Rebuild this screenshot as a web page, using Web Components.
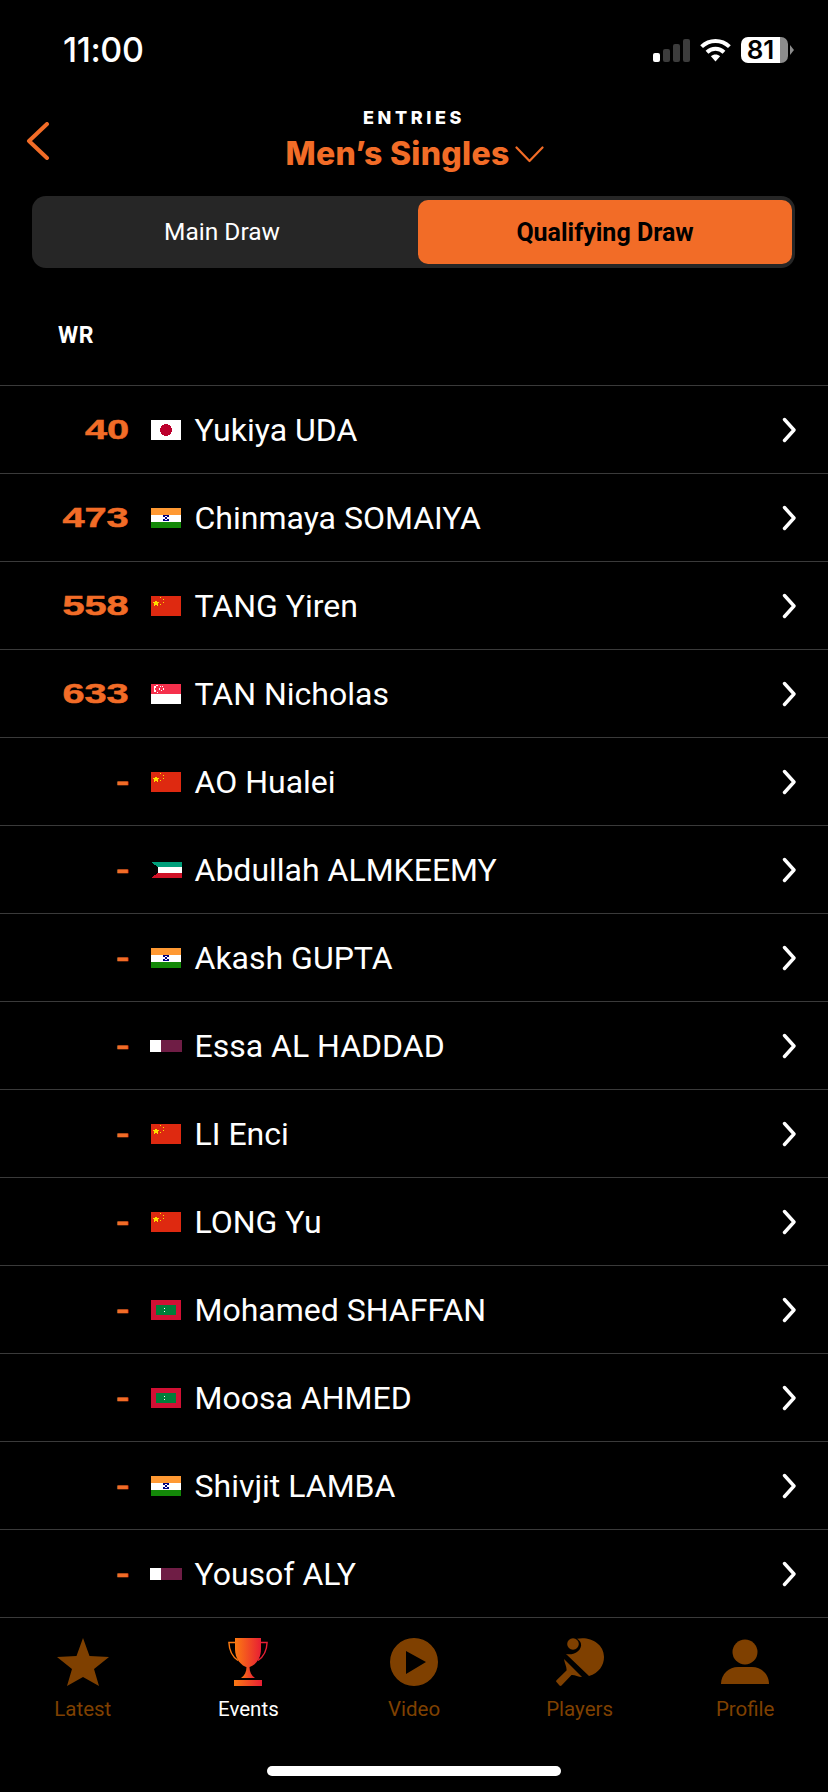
<!DOCTYPE html>
<html lang="en">
<head>
<meta charset="utf-8">
<title>Entries</title>
<style>
  html, body { margin: 0; background: #000; }
  body { width: 828px; height: 1792px; overflow: hidden; font-family: "Roboto", "Liberation Sans", sans-serif; }
</style>
</head>
<body>
<app-screen>
  <status-bar time="11:00" battery="81"></status-bar>
  <entries-header kicker="ENTRIES" title="Men’s Singles"></entries-header>
  <draw-switch first="Main Draw" second="Qualifying Draw"></draw-switch>
  <list-head>WR</list-head>
  <player-list></player-list>
  <tab-bar></tab-bar>
</app-screen>

<script>
const ORANGE = '#f26c27';

function shadow(el, html) {
  el.attachShadow({ mode: 'open' }).innerHTML = html;
}

class AppScreen extends HTMLElement {
  connectedCallback() {
    shadow(this, `<style>
      :host { display: flex; flex-direction: column; width: 828px; height: 1792px; background: #000; color: #fff; }
    </style><slot></slot>`);
  }
}

class StatusBar extends HTMLElement {
  connectedCallback() {
    const level = this.getAttribute('battery');
    shadow(this, `<style>
      :host { display: flex; align-items: center; justify-content: space-between; height: 98px; padding: 2px 34px 0 63px; box-sizing: border-box; }
      .time { font: 500 34px/1 "Inter", "Roboto", sans-serif; letter-spacing: -0.4px; }
      .right { display: flex; align-items: center; }
      .bars { display: flex; align-items: flex-end; gap: 3px; height: 23px; margin-right: 10px; }
      .bars i { width: 7px; border-radius: 2px; background: #3c3c3c; }
      .bars i:first-child { background: #fff; }
      .batt { display: flex; align-items: center; margin-left: 10px; }
      .cell { width: 47px; height: 26px; border-radius: 7px; box-sizing: border-box; padding-right: 8px; text-align: center;
        background: linear-gradient(90deg, #fff 39px, #8c8c8c 39px); color: #000;
        font: 600 26px/26px "Inter", "Roboto", sans-serif; }
      .tip { width: 0; height: 0; margin-left: 2px; border-left: 4px solid #8c8c8c; border-top: 5px solid transparent; border-bottom: 5px solid transparent; }
    </style>
    <span class="time">${this.getAttribute('time')}</span>
    <div class="right">
      <div class="bars"><i style="height:9px"></i><i style="height:13px"></i><i style="height:18px"></i><i style="height:23px"></i></div>
      <svg width="31" height="24" viewBox="0 0 31 24" fill="none" stroke="#fff" stroke-width="4">
        <path d="M1.6 8.6C9.4 1 21.6 1 29.4 8.6"/>
        <path d="M7 14.2C11.9 9.5 19.1 9.5 24 14.2"/>
        <path d="M10.9 18.2 15.5 23.5 20.1 18.2C17.5 15.8 13.5 15.8 10.9 18.2Z" fill="#fff" stroke="none"/>
      </svg>
      <div class="batt"><div class="cell">${level}</div><span class="tip"></span></div>
    </div>`);
  }
}

class EntriesHeader extends HTMLElement {
  connectedCallback() {
    shadow(this, `<style>
      :host { display: block; position: relative; height: 98px; text-align: center; }
      .kicker { padding-top: 7px; font: 800 18px/26px "Inter", "Roboto", sans-serif; letter-spacing: 3.6px; }
      .title { display: flex; justify-content: center; align-items: center; gap: 5px; height: 44px; margin-top: 1px; padding-left: 1px;
        color: ${ORANGE}; font: 800 32px/44px "Inter", "Roboto", sans-serif; letter-spacing: .3px; }
      .back { position: absolute; left: 26px; top: 24px; }
    </style>
    <svg class="back" width="24" height="38" viewBox="0 0 24 38" fill="none" stroke="${ORANGE}" stroke-width="4" stroke-linecap="round" stroke-linejoin="round">
      <path d="M21 2 3 19 21 36"/>
    </svg>
    <div class="kicker">${this.getAttribute('kicker')}</div>
    <div class="title"><span>${this.getAttribute('title')}</span>
      <svg width="29" height="17" viewBox="0 0 29 17" fill="none" stroke="${ORANGE}" stroke-width="2.200" stroke-linecap="round" stroke-linejoin="round"><path d="M1.500 1.500 14.500 15 27.500 1.500"/></svg>
    </div>`);
  }
}

class DrawSwitch extends HTMLElement {
  connectedCallback() {
    shadow(this, `<style>
      :host { display: grid; grid-template-columns: 1fr 374px; height: 72px; margin: 0 33px 0 32px; padding: 4px 3px 4px 0; box-sizing: border-box; background: #262626; border-radius: 14px; }
      div { display: flex; align-items: center; justify-content: center; font: 400 25px/1 "Roboto", sans-serif; }
      .first { padding-right: 6px; font-size: 24.500px; }
      .on { background: ${ORANGE}; color: #000; font-weight: 700; border-radius: 10px; }
    </style>
    <div class="first">${this.getAttribute('first')}</div>
    <div class="on">${this.getAttribute('second')}</div>`);
  }
}

class ListHead extends HTMLElement {
  connectedCallback() {
    shadow(this, `<style>
      :host { display: flex; align-items: center; height: 117px; padding: 18px 0 0 58px; box-sizing: border-box; }
      span { font: 700 23px/1 "Roboto", sans-serif; letter-spacing: .5px; }
    </style><span><slot></slot></span>`);
  }
}

const WHEEL = `<g fill="#000080"><rect x="12" y="7" width="2" height="2"/><rect x="16" y="7" width="2" height="2"/><rect x="14" y="7" width="2" height="1"/><rect x="14" y="9" width="2" height="2"/><rect x="12" y="11" width="2" height="2"/><rect x="16" y="11" width="2" height="2"/><rect x="14" y="12" width="2" height="1"/></g>`;

const FLAGS = {
  jp: [30, 20, `<rect width="30" height="20" fill="#fff"/><circle cx="15" cy="10" r="6" fill="#bc002d"/>`],
  in: [30, 20, `<rect width="30" height="7" fill="#ff9933"/><rect y="7" width="30" height="6.500" fill="#fff"/><rect y="13.500" width="30" height="6.500" fill="#138808"/>${WHEEL}`],
  cn: [30, 20, `<rect width="30" height="20" fill="#de2910"/><polygon points="5,3.500 5.900,6.200 8.700,6.200 6.400,7.800 7.300,10.400 5,8.800 2.800,10.400 3.600,7.800 1.400,6.200 4.100,6.200" fill="#ffde00"/>
    <g fill="#ffde00"><rect x="9" y="1" width="1" height="1"/><rect x="12" y="3" width="1" height="1"/><rect x="12" y="6" width="1" height="1"/><rect x="9" y="8" width="1" height="1"/></g>`],
  sg: [30, 20, `<rect width="30" height="10" fill="#f5304c"/><rect y="10" width="30" height="10" fill="#fff"/><circle cx="6.200" cy="5" r="3.600" fill="#fff"/><circle cx="7.800" cy="5" r="3.400" fill="#f5304c"/>
    <g fill="#fff"><rect x="8.500" y="2" width="1.200" height="1.200"/><rect x="11" y="2" width="1.200" height="1.200"/><rect x="7.800" y="4.400" width="1.200" height="1.200"/><rect x="11.600" y="4.400" width="1.200" height="1.200"/><rect x="9.800" y="6" width="1.200" height="1.200"/></g>`],
  kw: [31, 16, `<rect width="31" height="5.400" fill="#009e7a"/><rect y="5.400" width="31" height="5.300" fill="#fff"/><rect y="10.700" width="31" height="5.300" fill="#ce1126"/><polygon points="0,0 7,5.400 7,10.700 0,16" fill="#000"/>`],
  qa: [32, 12, `<rect width="32" height="12" fill="#6f1d45"/><polygon points="0,0 12,0 10,1 12,2 10,3 12,4 10,5 12,6 10,7 12,8 10,9 12,10 10,11 12,12 0,12" fill="#fff"/>`],
  mv: [30, 20, `<rect width="30" height="20" fill="#d21034"/><rect x="5" y="5" width="20" height="10" fill="#007e3a"/><path d="M15 6.600A3.600 3.600 0 0 0 15 13.400 4.400 4.400 0 0 1 15 6.600Z" fill="#fff"/>`]
};

class CountryFlag extends HTMLElement {
  connectedCallback() {
    const code = this.getAttribute('code');
    const [w, h, art] = FLAGS[code];
    shadow(this, `<style>
      :host { display: block; line-height: 0; margin-left: ${code === 'qa' ? -1 : 0}px; }
    </style><svg width="${w}" height="${h}" viewBox="0 0 ${w} ${h}" shape-rendering="crispEdges">${art}</svg>`);
  }
}

class PlayerRow extends HTMLElement {
  connectedCallback() {
    shadow(this, `<style>
      :host { display: grid; grid-template-columns: 129px 66px 1fr auto; align-items: center; height: 88px; box-sizing: border-box; border-top: 1px solid #3a3a3a; padding-right: 32px; }
      .rank { justify-self: end; color: ${ORANGE}; font: 700 28px/1 "Liberation Sans", sans-serif; -webkit-text-stroke: .5px ${ORANGE}; transform: scaleX(1.42); transform-origin: right center; }
      .flag { padding-left: 22px; }
      .name { font: 400 32px/1 "Roboto", sans-serif; margin-left: -.5px; }
      svg { display: block; }
    </style>
    <span class="rank">${this.getAttribute('rank')}</span>
    <div class="flag"><country-flag code="${this.getAttribute('flag')}"></country-flag></div>
    <span class="name"><slot></slot></span>
    <svg width="14" height="26" viewBox="0 0 14 26" fill="none" stroke="#fff" stroke-width="3.400" stroke-linecap="round" stroke-linejoin="round"><path d="M2.500 2.500 12 13 2.500 23.500"/></svg>`);
  }
}

const PLAYERS = [
  ['40', 'jp', 'Yukiya UDA'],
  ['473', 'in', 'Chinmaya SOMAIYA'],
  ['558', 'cn', 'TANG Yiren'],
  ['633', 'sg', 'TAN Nicholas'],
  ['-', 'cn', 'AO Hualei'],
  ['-', 'kw', 'Abdullah ALMKEEMY'],
  ['-', 'in', 'Akash GUPTA'],
  ['-', 'qa', 'Essa AL HADDAD'],
  ['-', 'cn', 'LI Enci'],
  ['-', 'cn', 'LONG Yu'],
  ['-', 'mv', 'Mohamed SHAFFAN'],
  ['-', 'mv', 'Moosa AHMED'],
  ['-', 'in', 'Shivjit LAMBA'],
  ['-', 'qa', 'Yousof ALY']
];

class PlayerList extends HTMLElement {
  connectedCallback() {
    shadow(this, `<style>:host { display: block; }</style>` + PLAYERS.map(function (p) {
      return `<player-row rank="${p[0]}" flag="${p[1]}">${p[2]}</player-row>`;
    }).join(''));
  }
}

const TAB_ICONS = {
  star: `<svg width="52" height="48" viewBox="0 0 52 48"><polygon fill="currentColor" points="26,0 32.500,18 52,19 37,31 42,48 26,39 10,48 15,31 0,19 19.500,18"/></svg>`,
  trophy: `<svg width="40" height="48" viewBox="0 0 40 48">
    <defs><linearGradient id="cup" x1="0" x2="1" y1="0" y2="0"><stop offset="0" stop-color="#fb7a12"/><stop offset="1" stop-color="#e81f34"/></linearGradient></defs>
    <path fill="none" stroke="#fb7a12" stroke-width="1.400" d="M7 4.500H.9C1.200 12 4 18.500 10 22.500"/>
    <path fill="none" stroke="#e81f34" stroke-width="1.400" d="M33 4.500H39.100C38.800 12 36 18.500 30 22.500"/>
    <path fill="url(#cup)" d="M7 0H33V11C33 21 27 28 20 29.500 13 28 7 21 7 11Z"/>
    <path fill="url(#cup)" d="M18.500 29H21.500C21.500 34 23.500 37.500 27 40H13C16.500 37.500 18.500 34 18.500 29Z"/>
    <rect fill="url(#cup)" x="6" y="42" width="28" height="6"/>
  </svg>`,
  play: `<svg width="48" height="48" viewBox="0 0 48 48"><path fill="currentColor" fill-rule="evenodd" d="M24 0A24 24 0 1 1 24 48 24 24 0 1 1 24 0ZM16 13V36L36 24Z"/></svg>`,
  paddle: `<svg width="48" height="48" viewBox="0 0 48 48"><g fill="currentColor">
    <circle cx="17" cy="6" r="5.800"/>
    <path d="M21 .8C33-2 48 5 48 19 48 27 43 35 33 38L10 16C17 17.500 24 14 25 8 25.500 5 24 2.500 21 .8Z"/>
    <path d="M8 21 26 39C22 39 18.500 36.500 15.500 37L5.500 47.500C4.800 48.200 4 48 3.500 47.500L.5 44C0 43.500 0 42.800.5 42.200L10.500 32.500C11 29 8.500 25 8 21Z"/>
  </g></svg>`,
  person: `<svg width="48" height="48" viewBox="0 0 48 48"><g fill="currentColor"><circle cx="24" cy="14" r="12.500"/><path d="M0 46C0 36 8 29 17 29H31C40 29 48 36 48 46Z"/></g></svg>`
};

class TabItem extends HTMLElement {
  connectedCallback() {
    const on = this.hasAttribute('active');
    shadow(this, `<style>
      :host { display: flex; flex-direction: column; align-items: center; color: ${on ? '#fff' : '#7f4000'}; }
      .icon { height: 48px; color: #7f4000; }
      svg { display: block; }
      .label { margin-top: 10px; font: 400 20.500px/26px "Roboto", sans-serif; }
    </style>
    <div class="icon">${TAB_ICONS[this.getAttribute('icon')]}</div>
    <span class="label">${this.getAttribute('label')}</span>`);
  }
}

class TabBar extends HTMLElement {
  connectedCallback() {
    shadow(this, `<style>
      :host { display: flex; flex-direction: column; flex: 1; box-sizing: border-box; border-top: 1px solid #3a3a3a; padding-top: 20px; }
      .tabs { display: grid; grid-template-columns: repeat(5, 1fr); }
      .home { width: 294px; height: 10px; margin: 44px auto 0; border-radius: 5px; background: #fff; }
    </style>
    <div class="tabs">
      <tab-item icon="star" label="Latest"></tab-item>
      <tab-item icon="trophy" label="Events" active></tab-item>
      <tab-item icon="play" label="Video"></tab-item>
      <tab-item icon="paddle" label="Players"></tab-item>
      <tab-item icon="person" label="Profile"></tab-item>
    </div>
    <div class="home"></div>`);
  }
}

customElements.define('app-screen', AppScreen);
customElements.define('status-bar', StatusBar);
customElements.define('entries-header', EntriesHeader);
customElements.define('draw-switch', DrawSwitch);
customElements.define('list-head', ListHead);
customElements.define('country-flag', CountryFlag);
customElements.define('player-row', PlayerRow);
customElements.define('player-list', PlayerList);
customElements.define('tab-item', TabItem);
customElements.define('tab-bar', TabBar);
</script>
</body>
</html>
